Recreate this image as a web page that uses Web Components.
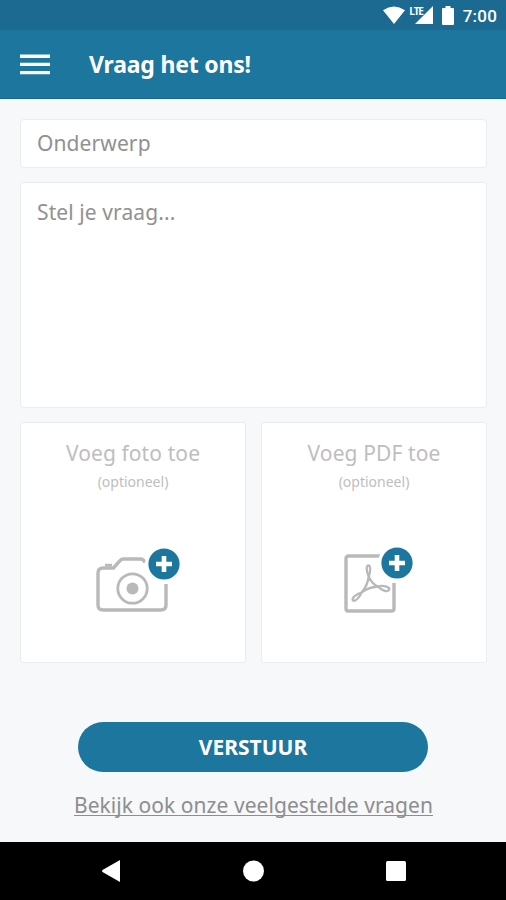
<!DOCTYPE html>
<html lang="nl">
<head>
<meta charset="utf-8">
<title>Vraag het ons!</title>
<style>
html,body{margin:0;height:100%}
body{font-family:"Noto Sans","Open Sans",sans-serif;background:#f6f8fa;overflow:hidden}
</style>
</head>
<body>
<ask-app></ask-app>
<script>
function define(name, markup) {
  const t = document.createElement('template');
  t.innerHTML = markup;
  customElements.define(name, class extends HTMLElement {
    constructor() {
      super();
      this.attachShadow({mode: 'open'}).append(t.content.cloneNode(true));
    }
  });
}

define('status-bar', `
<style>
:host{display:flex;height:30px;background:#1c6a92;color:#fff;align-items:center;justify-content:flex-end;box-sizing:border-box;padding-right:9px}
svg{display:block;fill:#fff}
.wifi{margin-right:4px}
.lte{font:700 10px/10px "Open Sans","Noto Sans",sans-serif;letter-spacing:-1.2px;align-self:flex-start;margin:6px -8px 0 0}
.signal{margin-right:9px}
.battery{margin-right:9px}
.time{font:500 17px/20px Roboto,sans-serif;letter-spacing:.2px;margin-top:2px}
</style>
<svg class="wifi" width="22" height="18" viewBox="0 0 22 18"><path d="M0 4.2Q11-3.2 22 4.2L11 18Z"/></svg>
<span class="lte">LTE</span>
<svg class="signal" width="18" height="18" viewBox="0 0 18 18"><path d="M18 0V18H0Z"/></svg>
<svg class="battery" width="12" height="19" viewBox="0 0 12 19"><path d="M3.5 0h5v2H11q1 0 1 1v15q0 1-1 1H1q-1 0-1-1V3q0-1 1-1h2.500z"/></svg>
<span class="time">7:00</span>`);

define('app-header', `
<style>
:host{display:flex;height:69px;background:#1c769e;color:#fff;align-items:center;padding-left:20px;box-sizing:border-box;border-bottom:1px solid #14688f}
svg{display:block;margin-right:39px}
.title{font-size:23px;line-height:30px;font-weight:700;letter-spacing:-.2px;margin-top:-1px}
</style>
<svg width="30" height="22" viewBox="0 0 30 22"><path d="M0 3.200h30M0 11.400h30M0 19.600h30" stroke="#fff" stroke-width="3.400"/></svg>
<div class="title"><slot></slot></div>`);

define('form-field', `
<style>
:host{display:block;box-sizing:border-box;background:#fff;border:1px solid #e9edef;border-radius:4px;color:#919191;font-size:21px;line-height:28px;padding:9px 16px}
</style><slot></slot>`);

define('plus-badge', `
<style>:host{display:block;width:38px;height:38px}svg{display:block}</style>
<svg width="38" height="38" viewBox="0 0 38 38"><circle cx="19" cy="19" r="19" fill="#fff"/><circle cx="19" cy="19" r="15.600" fill="#1c769e"/><path d="M19 11v16M11 19h16" stroke="#fff" stroke-width="4.600"/></svg>`);

define('camera-icon', `
<style>:host{display:block}svg{display:block}</style>
<svg width="72" height="56" viewBox="0 0 72 56" fill="none" stroke="#b9b9b9" stroke-width="3.400">
<path d="M49 5.500Q47.500 2 44.500 2H27.500Q25.500 2 24 3.700L17.500 11H7Q2 11 2 16V48Q2 53 7 53H65Q70 53 70 48V27"/>
<path d="M9 8.200h7" stroke-width="2.800"/>
<circle cx="36.500" cy="31.500" r="14.700" stroke-width="2.800"/><circle cx="36.500" cy="31.500" r="6" fill="#b9b9b9" stroke="none"/></svg>`);

define('pdf-icon', `
<style>:host{display:block}svg{display:block}</style>
<svg width="52" height="60" viewBox="0 0 52 60" fill="none" stroke="#b9b9b9" stroke-width="3.400">
<path d="M36 3H4.500Q2 3 2 5.500V55.500Q2 58 4.500 58H47.500Q50 58 50 55.500V30"/>
<path stroke-width="2.300" stroke-linejoin="round" d="M24.300 12.500C21.800 12.500 22.500 19 24.700 23.500C26.700 19 26.700 12.500 24.300 12.500ZM24.700 23.500C24 29.500 21.500 35 17.800 39.300C12.500 41 7.500 44.500 8.800 47.300C11.500 49.300 15.500 44 17.800 39.300M24.700 23.500C26.500 28 29.500 31.500 33.700 33.500C39 32 46 33.500 45.300 36.700C43 40 37.500 37 33.700 33.500C28 34 22 36 17.800 39.300"/></svg>`);

define('upload-card', `
<style>
:host{display:flex;flex-direction:column;align-items:center;box-sizing:border-box;background:#fff;border:1px solid #e9edef;border-radius:3px;color:#bebebe;padding-top:16px}
.title{font-size:21px;line-height:28px;white-space:nowrap}
.note{font-size:14px;line-height:18px;margin-top:6px;white-space:nowrap}
.art{position:relative;margin-top:var(--art-gap)}
.badge{position:absolute;left:var(--bx);top:var(--by)}
</style>
<div class="title"><slot name="title"></slot></div>
<div class="note"><slot name="note"></slot></div>
<div class="art"><slot></slot><plus-badge class="badge"></plus-badge></div>`);

define('submit-button', `
<style>
:host{display:block}
button{display:block;width:350px;height:50px;border:0;padding:0;border-radius:25px;background:#1c769e;color:#fff;font:inherit;font-weight:700;font-size:21px;line-height:50px}
</style><button><slot></slot></button>`);

define('nav-bar', `
<style>
:host{display:flex;height:58px;background:#000;align-items:center;justify-content:space-between;padding:0 100px 0 102px;box-sizing:border-box}
svg{display:block;fill:#fff}
</style>
<svg width="18" height="22" viewBox="0 0 18 22"><path d="M18 0V22L.5 12Q-.3 11 .5 10Z"/></svg>
<svg width="22" height="22" viewBox="0 0 22 22"><circle cx="11.500" cy="11" r="10.500"/></svg>
<svg width="20" height="20" viewBox="0 0 20 20"><rect width="20" height="20" rx="1.500"/></svg>`);

define('ask-app', `
<style>
:host{display:flex;flex-direction:column;width:506px;height:900px}
main{flex:1;box-sizing:border-box;padding:20px 19px 0 20px;display:flex;flex-direction:column}
.subject{height:49px;margin-bottom:14px}
.question{height:226px;margin-bottom:14px;padding-top:15px}
.cards{display:grid;grid-template-columns:226px 226px;gap:15px;height:241px}
.photo{--art-gap:66px;--bx:49px;--by:-12.5px}
.photo camera-icon{margin-right:2px}
.pdf{--art-gap:62px;--bx:34px;--by:-9.5px}
.pdf pdf-icon{margin-right:8px}
.send{align-self:center;margin:59px 1px 0 0}
a{align-self:center;margin-top:19px;color:#8e8e8e;font-size:21px;line-height:28px;white-space:nowrap;text-decoration:underline;text-decoration-thickness:1px;text-underline-offset:2px;text-decoration-skip-ink:none}
.tracked{letter-spacing:.1px}
.link{letter-spacing:.05px}
</style>
<status-bar></status-bar>
<app-header><span>Vraag het ons!</span></app-header>
<main>
<form-field class="subject"><span class="tracked">Onderwerp</span></form-field>
<form-field class="question"><span class="tracked">Stel je vraag...</span></form-field>
<div class="cards">
<upload-card class="photo"><span slot="title" class="tracked">Voeg foto toe</span><span slot="note">(optioneel)</span><camera-icon></camera-icon></upload-card>
<upload-card class="pdf"><span slot="title" class="tracked">Voeg PDF toe</span><span slot="note">(optioneel)</span><pdf-icon></pdf-icon></upload-card>
</div>
<submit-button class="send">VERSTUUR</submit-button>
<a href="#"><span class="link">Bekijk ook onze veelgestelde vragen</span></a>
</main>
<nav-bar></nav-bar>`);
</script>
</body>
</html>
